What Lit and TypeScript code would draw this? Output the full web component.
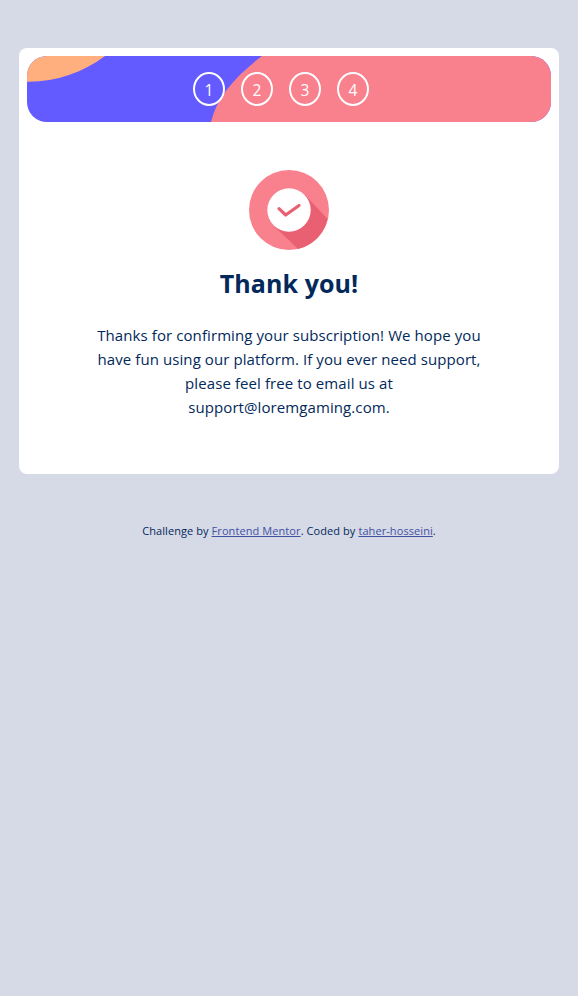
import { LitElement, html, css, svg } from "lit";
import { customElement, property } from "lit/decorators.js";

@customElement("step-banner")
class StepBanner extends LitElement {
  static styles = css`
    :host {
      display: block;
    }
    .banner {
      position: relative;
      height: 66px;
      border-radius: 20px;
      overflow: hidden;
      background: #635bff;
    }
    .shapes {
      position: absolute;
      inset: 0;
      width: 524px;
      height: 66px;
    }
    .steps {
      position: relative;
      display: flex;
      gap: 16px;
      padding: 16px 0 0 166px;
    }
    .step {
      box-sizing: border-box;
      width: 32px;
      height: 34px;
      border: 2px solid #fff;
      border-radius: 50%;
      color: #fff;
      font-size: 15.5px;
      line-height: 32px;
      text-align: center;
    }
  `;
  @property({ type: Array }) steps = [1, 2, 3, 4];

  render() {
    return html`<div class="banner">
      <svg class="shapes" viewBox="0 0 524 66" aria-hidden="true">
        <path d="M0 0H78C55 17 29 26 0 25.7Z" fill="#ffaf7e" />
        <path d="M235 0C207 21 189 43 184 66H524V0Z" fill="#f9818e" />
      </svg>
      <div class="steps">
        ${this.steps.map((n) => html`<div class="step">${n}</div>`)}
      </div>
    </div>`;
  }
}

const badge = svg`
  <circle cx="40" cy="40" r="40" fill="#f9818e" />
  <path d="M56 25L78.6 49A40 40 0 0 1 49 79L26 57Z" fill="#e96073" />
  <circle cx="40" cy="40" r="21.7" fill="#fff" />
  <path d="M30 38.6L36.7 45L50 35.5" fill="none" stroke="#e96073"
    stroke-width="3.2" stroke-linecap="round" stroke-linejoin="round" />`;

@customElement("app-root")
class AppRoot extends LitElement {
  static styles = css`
    :host {
      display: block;
      box-sizing: border-box;
      min-height: 100vh;
      padding: 48px 19px 0;
      background: #d6d9e6;
      color: #02295a;
      font-family: "Open Sans", "Noto Sans", sans-serif;
    }
    .card {
      box-sizing: border-box;
      height: 426px;
      padding: 8px;
      background: #fff;
      border-radius: 8px;
    }
    .thanks {
      display: flex;
      flex-direction: column;
      align-items: center;
      padding-top: 48px;
      text-align: center;
    }
    .badge {
      width: 80px;
      height: 80px;
    }
    h1 {
      margin: 15px 0 0;
      font-size: 25px;
      line-height: 36px;
      font-weight: 700;
      letter-spacing: 0.1px;
    }
    p {
      margin: 22px 0 0;
      font-size: 15px;
      line-height: 24px;
      letter-spacing: 0.09px;
    }
    footer {
      margin-top: 49px;
      font-size: 11px;
      line-height: 15px;
      letter-spacing: 0.08px;
      text-align: center;
    }
    a {
      color: #3e52a3;
      text-decoration: underline;
    }
  `;

  render() {
    return html`
      <main class="card">
        <step-banner></step-banner>
        <section class="thanks">
          <svg class="badge" viewBox="0 0 80 80" aria-hidden="true">${badge}</svg>
          <h1>Thank you!</h1>
          <p>
            Thanks for confirming your subscription! We hope you<br />
            have fun using our platform. If you ever need support,<br />
            please feel free to email us at<br />
            support@loremgaming.com.
          </p>
        </section>
      </main>
      <footer>
        Challenge by <a href="#">Frontend Mentor</a>. Coded by
        <a href="#">taher-hosseini</a>.
      </footer>
    `;
  }
}
